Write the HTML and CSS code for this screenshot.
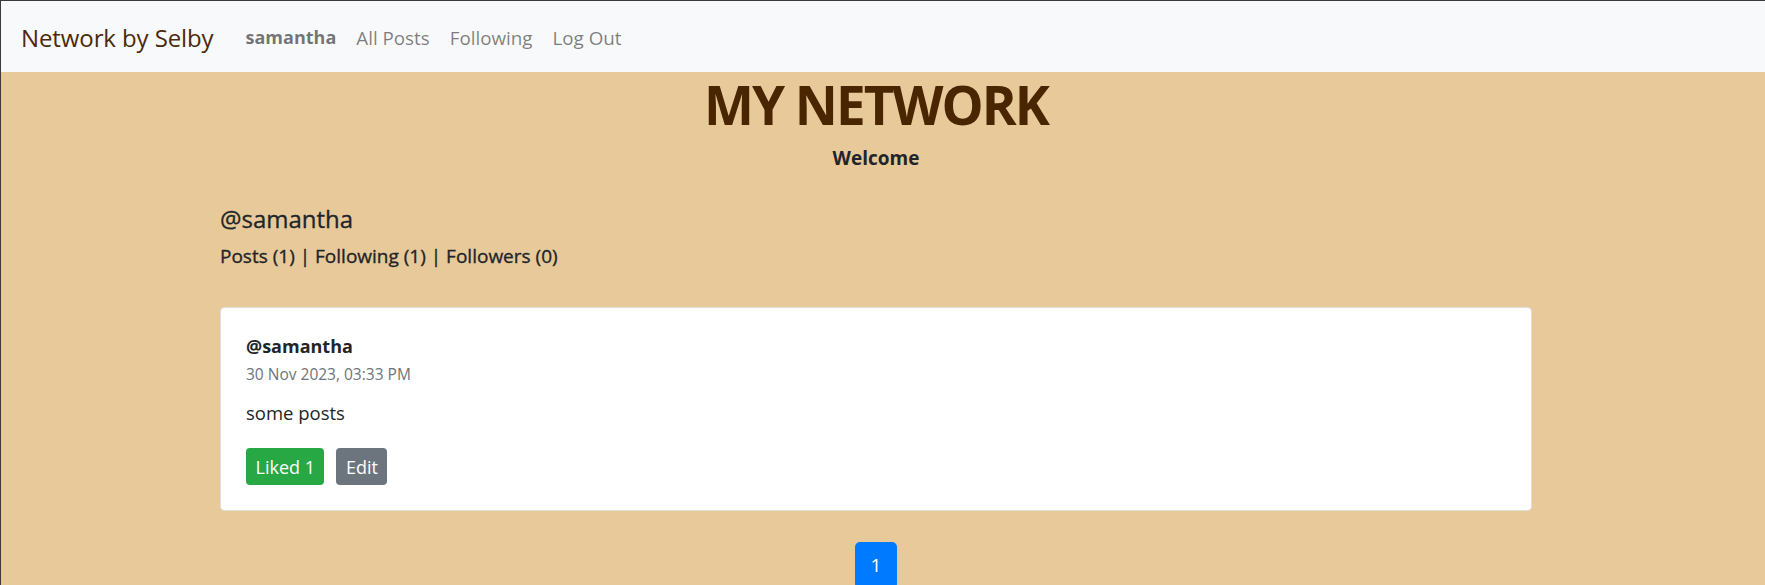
FILE: index.html
```html
<!DOCTYPE html>
<html lang="en">
<head>
<meta charset="utf-8">
<title>Network by Selby</title>
<link rel="stylesheet" href="styles.css">
</head>
<body>
<nav class="navbar">
  <a class="brand" href="#">Network by Selby</a>
  <ul class="nav-links">
    <li><a class="nav-link user" href="#">samantha</a></li>
    <li><a class="nav-link" href="#">All Posts</a></li>
    <li><a class="nav-link" href="#">Following</a></li>
    <li><a class="nav-link" href="#">Log Out</a></li>
  </ul>
</nav>
<main class="page">
  <div class="container">
    <h1 class="title">MY NETWORK</h1>
    <h5 class="welcome">Welcome</h5>
    <section class="profile">
      <h4 class="handle">@samantha</h4>
      <p class="stats">Posts (1) | Following (1) | Followers (0)</p>
    </section>
    <article class="card">
      <h6 class="post-user">@samantha</h6>
      <p class="post-date">30 Nov 2023, 03:33 PM</p>
      <p class="post-body">some posts</p>
      <div class="actions">
        <button class="btn btn-success">Liked 1</button>
        <button class="btn btn-secondary">Edit</button>
      </div>
    </article>
    <nav class="pagination">
      <a class="page-link" href="#">1</a>
    </nav>
  </div>
</main>
</body>
</html>
```
FILE: styles.css
```css
html, body {
  margin: 0;
  padding: 0;
}
body {
  font-family: "Open Sans", "Noto Sans", sans-serif;
  color: #212529;
  background: #e8ca9a;
  border-top: 1px solid #3a3a3a;
  border-left: 1px solid #3a3a3a;
  min-height: 584px;
  box-sizing: border-box;
  overflow: hidden;
}
a { text-decoration: none; }

.navbar {
  display: flex;
  align-items: center;
  height: 71px;
  padding: 2px 20px 0;
  box-sizing: border-box;
  background: #f8f9fa;
}
.brand {
  font-size: 24px;
  color: #4a2a0a;
  margin-right: 22px;
  letter-spacing: -0.1px;
}
.nav-links {
  display: flex;
  list-style: none;
  margin: 0;
  padding: 0;
}
.nav-link {
  display: block;
  padding: 0 10px;
  font-size: 18.8px;
  color: rgba(0, 0, 0, 0.5);
}
.nav-link.user {
  font-weight: 700;
  font-size: 18px;
  color: rgba(0, 0, 0, 0.55);
}

.page {
  padding-right: 14px;
}
.container {
  width: 1312px;
  margin: 0 auto;
}
.title {
  margin: 5px 0 0;
  text-align: center;
  font-size: 53px;
  line-height: 56px;
  font-weight: 700;
  letter-spacing: -2px;
  color: #4a2600;
}
.welcome {
  margin: 13px 0 0;
  text-align: center;
  font-size: 19px;
  line-height: 24px;
  font-weight: 700;
}
.handle {
  margin: 34px 0 0;
  font-size: 24px;
  line-height: 30px;
  font-weight: 500;
  -webkit-text-stroke: 0.3px #212529;
}
.stats {
  margin: 9px 0 0;
  font-size: 19px;
  line-height: 26px;
  font-weight: 500;
  -webkit-text-stroke: 0.35px #212529;
}
.card {
  margin-top: 38px;
  background: #fff;
  border: 1px solid rgba(0, 0, 0, 0.125);
  border-radius: 5px;
  padding: 26px 25px 25px;
}
.post-user {
  margin: 0;
  font-size: 18px;
  line-height: 24px;
  font-weight: 700;
}
.post-date {
  margin: 6px 0 0;
  font-size: 15.5px;
  line-height: 20px;
  color: #6c757d;
}
.post-body {
  margin: 16px 0 0;
  font-size: 18.5px;
  line-height: 26px;
}
.actions {
  display: flex;
  gap: 12px;
  margin-top: 22px;
}
.btn {
  height: 37px;
  padding: 0 9.5px;
  border: 0;
  border-radius: 4px;
  font-family: inherit;
  font-size: 18px;
  color: #fff;
}
.btn-success { background: #28a745; }
.btn-secondary { background: #6c757d; }

.pagination {
  display: flex;
  justify-content: center;
  margin-top: 31px;
}
.page-link {
  display: block;
  width: 42px;
  height: 47px;
  line-height: 47px;
  text-align: center;
  background: #007bff;
  color: #fff;
  font-size: 19px;
  border-radius: 5px;
}
```
